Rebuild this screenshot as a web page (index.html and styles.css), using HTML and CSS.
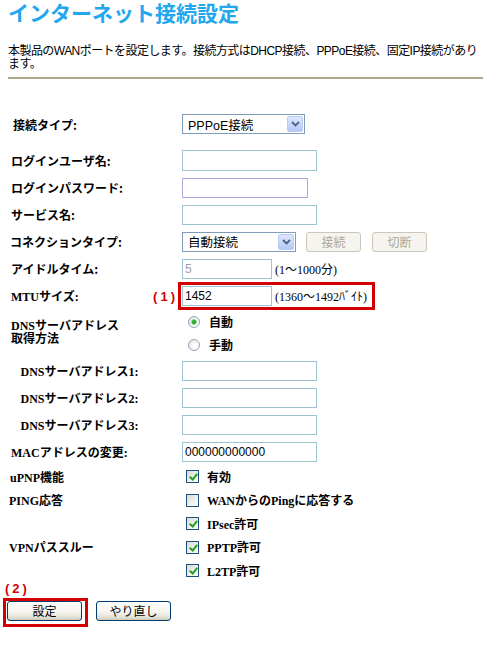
FILE: index.html
```html
<!DOCTYPE html>
<html lang="ja">
<head>
<meta charset="utf-8">
<title>インターネット接続設定</title>
<link rel="stylesheet" href="styles.css">
</head>
<body>
<div class="page">
  <h1 class="title">インターネット接続設定</h1>
  <p class="lead">本製品のWANポートを設定します。接続方式はDHCP接続、PPPoE接続、固定IP接続があり<br>ます。</p>
  <hr class="rule">

  <form class="form">
    <div class="row row-first">
      <div class="label pad-5">接続タイプ:</div>
      <div class="field">
        <div class="select w123">
          <span class="select-value">PPPoE接続</span>
          <span class="select-btn"><svg width="9" height="6" viewBox="0 0 9 6"><path d="M1 1 L4.5 4.5 L8 1" fill="none" stroke="#4d6185" stroke-width="1.8"/></svg></span>
        </div>
      </div>
    </div>

    <div class="row row-gap">
      <div class="label">ログインユーザ名:</div>
      <div class="field"><input type="text" class="text w135 h21"></div>
    </div>
    <div class="row">
      <div class="label">ログインパスワード:</div>
      <div class="field"><input type="password" class="text w126 pass"></div>
    </div>
    <div class="row">
      <div class="label">サービス名:</div>
      <div class="field"><input type="text" class="text w135"></div>
    </div>
    <div class="row">
      <div class="label pad-2">コネクションタイプ:</div>
      <div class="field">
        <div class="select w114">
          <span class="select-value">自動接続</span>
          <span class="select-btn"><svg width="9" height="6" viewBox="0 0 9 6"><path d="M1 1 L4.5 4.5 L8 1" fill="none" stroke="#4d6185" stroke-width="1.8"/></svg></span>
        </div>
        <button type="button" class="btn-off first-off" disabled>接続</button>
        <button type="button" class="btn-off" disabled>切断</button>
      </div>
    </div>
    <div class="row">
      <div class="label">アイドルタイム:</div>
      <div class="field">
        <input type="text" class="text w90 dim" value="5">
        <span class="hint">(1～1000分)</span>
      </div>
    </div>
    <div class="row row-mtu">
      <div class="label serif">MTUサイズ:<span class="note note-1">(1)</span></div>
      <div class="field">
        <div class="mark">
          <input type="text" class="text w90" value="1452">
          <span class="hint">(1360～1492ﾊﾞｲﾄ)</span>
        </div>
      </div>
    </div>

    <div class="row row-dns">
      <div class="label serif dns-label">DNSサーバアドレス<br>取得方法</div>
      <div class="options">
        <label class="opt"><input type="radio" class="radio" name="dns" checked><span class="opt-text">自動</span></label>
        <label class="opt"><input type="radio" class="radio" name="dns"><span class="opt-text">手動</span></label>
      </div>
    </div>

    <div class="row">
      <div class="label serif pad-12">DNSサーバアドレス1:</div>
      <div class="field"><input type="text" class="text w135"></div>
    </div>
    <div class="row">
      <div class="label serif pad-12">DNSサーバアドレス2:</div>
      <div class="field"><input type="text" class="text w135"></div>
    </div>
    <div class="row">
      <div class="label serif pad-12">DNSサーバアドレス3:</div>
      <div class="field"><input type="text" class="text w135"></div>
    </div>
    <div class="row">
      <div class="label serif">MACアドレスの変更:</div>
      <div class="field"><input type="text" class="text w135" value="000000000000"></div>
    </div>

    <div class="row row-check">
      <div class="label serif pad-2">uPNP機能</div>
      <label class="opt"><input type="checkbox" class="check" checked><span class="opt-text">有効</span></label>
    </div>
    <div class="row row-check">
      <div class="label serif pad-1">PING応答</div>
      <label class="opt"><input type="checkbox" class="check"><span class="opt-text serif">WANからのPingに応答する</span></label>
    </div>
    <div class="row row-check">
      <div class="label serif"></div>
      <label class="opt"><input type="checkbox" class="check" checked><span class="opt-text serif">IPsec許可</span></label>
    </div>
    <div class="row row-check">
      <div class="label serif pad-1">VPNパススルー</div>
      <label class="opt"><input type="checkbox" class="check" checked><span class="opt-text serif">PPTP許可</span></label>
    </div>
    <div class="row row-check">
      <div class="label serif"></div>
      <label class="opt"><input type="checkbox" class="check" checked><span class="opt-text serif">L2TP許可</span></label>
    </div>

    <div class="note-line"><span class="note">(2)</span></div>
    <div class="actions">
      <div class="mark mark-btn"><button type="submit" class="btn">設定</button></div>
      <button type="reset" class="btn btn-reset">やり直し</button>
    </div>
  </form>
</div>
</body>
</html>
```

FILE: styles.css
```css
html, body {
  margin: 0;
  padding: 0;
  background: #fff;
}

body {
  font-family: "Noto Sans CJK JP", sans-serif;
  color: #000;
}

.page {
  width: 475px;
  padding: 0 8px;
}

/* Heading and intro */
.title {
  margin: 0;
  font-size: 21px;
  line-height: 24px;
  font-weight: 700;
  white-space: nowrap;
  color: #21a7ee;
}

.lead {
  margin: 21px 0 0;
  font-family: "Liberation Sans", "Noto Sans CJK JP", sans-serif;
  font-size: 12px;
  line-height: 13px;
  letter-spacing: -0.55px;
  white-space: nowrap;
}

.rule {
  margin: 6px 0 0;
  border: 0;
  height: 2px;
  background: #aea78f;
}

/* Form rows */
.form {
  margin: 32px 0 0;
}

.row {
  display: flex;
  align-items: center;
  height: 27px;
}

.row-first {
  height: 26px;
}

.row-gap {
  margin-top: 10px;
}

.row-mtu {
  height: 28px;
}

.row-dns {
  height: 47px;
  align-items: flex-start;
}

.row-check {
  height: 23.5px;
}

.label {
  box-sizing: border-box;
  width: 174px;
  flex: none;
  padding-left: 3px;
  font-size: 12px;
  font-weight: 700;
  display: flex;
  align-items: center;
  white-space: nowrap;
}

.serif {
  font-family: "Liberation Serif", "Noto Sans CJK JP", serif;
}

.pad-1 { padding-left: 1px; }
.pad-2 { padding-left: 2px; }
.pad-5 { padding-left: 5px; }
.pad-12 { padding-left: 12.5px; }

.dns-label {
  display: block;
  line-height: 13px;
  padding-top: 10px;
}

.field {
  display: flex;
  align-items: center;
}

/* Text boxes */
.text {
  box-sizing: border-box;
  height: 20px;
  margin: 0;
  padding: 0 2px;
  border: 1px solid #9cc4d2;
  background: #fff;
  font-family: "Liberation Sans", "Noto Sans CJK JP", sans-serif;
  font-size: 12px;
  color: #000;
  outline: none;
}

.h21 { height: 21px; }
.w90 { width: 90px; }
.w126 { width: 126px; }
.w135 { width: 135px; }

.pass {
  border-color: #a9aadb;
}

.dim {
  color: #a3a3a3;
}

.hint {
  margin-left: 3px;
  font-family: "Liberation Serif", "Noto Sans CJK JP", serif;
  font-size: 12px;
  white-space: nowrap;
}

/* Drop-down lists */
.select {
  box-sizing: border-box;
  height: 20px;
  border: 1px solid #7f9db9;
  background: #fff;
  display: flex;
  align-items: center;
  justify-content: space-between;
  padding: 0 1px 0 5px;
  font-family: "Liberation Sans", "Noto Sans CJK JP", sans-serif;
  font-size: 12.5px;
}

.w114 { width: 114px; }
.w123 { width: 123px; }

.select-btn {
  box-sizing: border-box;
  width: 16px;
  height: 16px;
  border: 1px solid #b8cbf3;
  border-radius: 2px;
  background: linear-gradient(#dde7fe, #b4c8f6);
  display: flex;
  align-items: center;
  justify-content: center;
}

/* Buttons */
.btn-off {
  box-sizing: border-box;
  width: 55px;
  height: 20px;
  margin: 0 0 0 11px;
  padding: 0;
  border: 1px solid #cbc8bb;
  border-radius: 3px;
  background: #f5f4ee;
  color: #aca899;
  font-family: "Noto Sans CJK JP", sans-serif;
  font-size: 12px;
}

.first-off {
  margin-left: 10px;
}

.btn {
  box-sizing: border-box;
  width: 75px;
  height: 20px;
  margin: 0;
  padding: 0;
  border: 1px solid #003c74;
  border-radius: 3px;
  background: linear-gradient(#ffffff 0%, #f6f5f0 55%, #e4e1d4 85%, #cfcab8 100%);
  color: #000;
  font-family: "Noto Sans CJK JP", sans-serif;
  font-size: 12px;
  line-height: 18px;
}

.btn-reset {
  margin: 3px 0 0 8px;
}

/* Red call-outs */
.mark {
  display: flex;
  align-items: center;
  border: 3px solid #d40000;
  padding: 1px 5px 1px 1px;
  margin-left: -4px;
}

.note {
  color: #d40000;
  font-family: "Liberation Sans", sans-serif;
  font-size: 13px;
  font-weight: 700;
  letter-spacing: 3px;
}

.note-1 {
  margin-left: auto;
  margin-right: 4px;
}

.note-line {
  margin: -3px 0 0 -3px;
  line-height: 13px;
  height: 13px;
}

.actions {
  display: flex;
  align-items: flex-start;
  margin: 5.5px 0 0 -5px;
}

.mark-btn {
  margin-left: 0;
  padding: 0 3px 3px 1px;
}

/* Radio buttons and check boxes */
.options {
  display: flex;
  flex-direction: column;
}

.opt {
  display: flex;
  align-items: center;
  height: 23px;
}

.row-check .opt {
  height: 23.5px;
}

.opt-text {
  font-size: 12px;
  font-weight: 700;
  margin-left: 8px;
  white-space: nowrap;
}

.radio {
  -webkit-appearance: none;
  appearance: none;
  box-sizing: border-box;
  width: 12px;
  height: 12px;
  margin: 0 0 0 6px;
  border: 1px solid #92a5bd;
  border-radius: 50%;
  background: radial-gradient(circle at 65% 65%, #ffffff 25%, #d9d9d4 100%);
}

.radio:checked {
  background:
    radial-gradient(circle, #2bb02b 0 1.8px, #9edb9e 2.4px 2.8px, transparent 3.2px),
    radial-gradient(circle at 65% 65%, #ffffff 25%, #d9d9d4 100%);
}

.radio + .opt-text {
  margin-left: 9px;
}

.check {
  -webkit-appearance: none;
  appearance: none;
  position: relative;
  box-sizing: border-box;
  width: 13px;
  height: 13px;
  margin: 0 0 0 4px;
  border: 1px solid #1c5180;
  background: linear-gradient(135deg, #d9d9d3 0%, #f2f2ee 60%, #ffffff 100%);
}

.check:checked::after {
  content: "";
  position: absolute;
  left: 3.5px;
  top: 1px;
  width: 3px;
  height: 6px;
  border: solid #21a121;
  border-width: 0 2px 2px 0;
  transform: rotate(40deg);
}
```
